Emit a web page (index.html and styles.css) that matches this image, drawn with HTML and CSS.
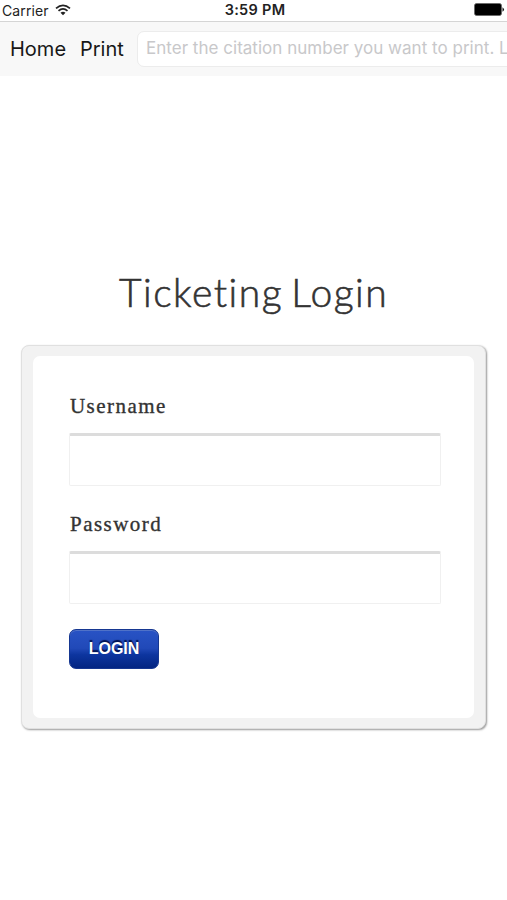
FILE: index.html
```
<!DOCTYPE html>
<html lang="en">
<head>
<meta charset="utf-8">
<meta name="viewport" content="width=device-width">
<title>Ticketing Login</title>
<link rel="stylesheet" href="styles.css">
</head>
<body>
<header class="status">
  <div class="carrier"><span>Carrier</span>
    <svg class="wifi" width="16" height="12" viewBox="0 0 16 12" fill="none" stroke="#222" stroke-width="1.7"><path d="M1 4.3Q8-1.7 15 4.3M3.5 6.9Q8 2.9 12.5 6.9"/><path d="M5.5 8.7Q8 6.7 10.5 8.7L8 11.3Z" fill="#222" stroke="none"/></svg>
  </div>
  <time class="clock">3:59 PM</time>
  <svg class="battery" width="31" height="13" viewBox="0 0 31 13"><rect x=".5" y=".5" width="27" height="12" rx="2" fill="#000" stroke="#666" stroke-width=".8"/><path d="M28.5 4.2Q31.5 6.5 28.5 8.8Z" fill="#111"/></svg>
</header>
<nav class="toolbar">
  <a class="link home">Home</a>
  <a class="link print">Print</a>
  <div class="citation"><span>Enter the citation number you want to print. L</span></div>
</nav>
<main>
  <h1>Ticketing Login</h1>
  <div class="frame">
    <form class="panel">
      <label for="user">Username</label>
      <input id="user" type="text">
      <label for="pass">Password</label>
      <input id="pass" type="password">
      <button type="button">LOGIN</button>
    </form>
  </div>
</main>
</body>
</html>
```
FILE: styles.css
```
* { box-sizing: border-box; }
body {
  margin: 0;
  height: 900px;
  overflow: hidden;
  background: #fff;
  font-family: Inter, "Liberation Sans", sans-serif;
}
.status {
  display: grid;
  grid-template-columns: 1fr auto 1fr;
  align-items: center;
  height: 21px;
  padding: 0 2px;
  color: #222;
}
.carrier { display: flex; align-items: center; gap: 6px; font: 14px/20px Inter, sans-serif; letter-spacing: .1px; }
.wifi { margin-top: -2px; }
.clock { font-size: 14.5px; line-height: 20px; font-weight: 600; letter-spacing: .3px; margin-left: 3px; margin-top: -1px; }
.battery { justify-self: end; margin-right: 0; margin-top: -2px; }
.toolbar {
  display: flex;
  align-items: center;
  height: 55px;
  padding: 0 0 0 10px;
  overflow: hidden;
  background: #f8f8f8;
  border-top: 1px solid #d5d5d5;
}
.link { flex: none; color: #171717; font: 20px/36px Inter, sans-serif; white-space: nowrap; }
.home { width: 70px; letter-spacing: 0; }
.print { width: 57px; letter-spacing: 0; }
.citation {
  flex: none;
  width: 440px;
  height: 36px;
  padding-left: 8px;
  background: #fff;
  border: 1px solid #ececec;
  border-radius: 7px;
  color: #c8c8ca;
  font: 17px/33px Inter, sans-serif;
  letter-spacing: .02px;
  white-space: nowrap;
}
main { padding: 188px 21px 0; }
h1 {
  margin: 0;
  height: 81px;
  padding-left: 98px;
  color: #333;
  font: 300 39px/56px Lato, sans-serif;
  letter-spacing: 1.5px;
  word-spacing: -4px;
  -webkit-text-stroke: .6px #333;
  white-space: nowrap;
}
.frame {
  width: 465px;
  height: 384px;
  padding: 10px 11px;
  background: #f2f2f2;
  border: 1px solid #e0e0e0;
  border-radius: 8px;
  box-shadow: 1px 1px 2px #999;
}
.panel {
  display: flex;
  flex-direction: column;
  align-items: flex-start;
  width: 441px;
  height: 362px;
  padding: 38px 33px 0 36px;
  background: #fff;
  border-radius: 7px;
}
label {
  height: 39px;
  padding-left: 1px;
  color: #333;
  font: 21px/24px "Liberation Serif", serif;
  letter-spacing: 1.45px;
  -webkit-text-stroke: .35px #333;
}
input {
  width: 372px;
  height: 53px;
  margin: 0 0 26px;
  padding: 0 10px;
  background: #fff;
  border: 1px solid #f0f0f0;
  border-top: 3px solid #dcdcdc;
  border-radius: 2px;
  outline: 0;
}
button {
  width: 90px;
  height: 40px;
  margin-top: -1px;
  padding: 0;
  color: #fff;
  background: linear-gradient(#2853c5, #2149b8 48%, #0d359f 65%, #032582);
  border: 1px solid #163791;
  border-radius: 7px;
  box-shadow: inset 0 1px 0 #5072c8;
  font: bold 16px/38px "Liberation Sans", sans-serif;
  text-shadow: 0 -2px 1px #00104c;
}
```
